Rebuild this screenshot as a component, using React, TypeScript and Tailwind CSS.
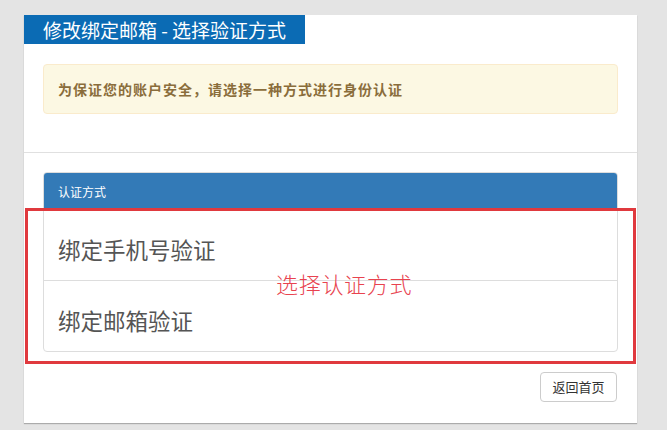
import React from "react";

export default function App() {
  const font = { fontFamily: '"Noto Sans CJK SC", "Liberation Sans", sans-serif' };
  return (
    <div className="w-[667px] h-[430px] bg-[#e4e4e4] pt-[15px] pl-[24px] overflow-hidden" style={font}>
      <div className="relative w-[613px] h-[408px] bg-white shadow-[0_1px_1px_rgba(0,0,0,0.25)]">
        <div className="w-[281px] h-[29px] bg-[#0b6bb4] text-white text-[19px] leading-[29px] pl-[19px] whitespace-nowrap">
          修改绑定邮箱 - 选择验证方式
        </div>
        <div className="mt-[20px] mx-[19px] h-[50px] bg-[#fcf8e3] border border-[#faebcc] rounded-[4px] flex items-center pl-[14px] text-[#8a6d3b] text-[14px] font-bold tracking-[1px]">
          为保证您的账户安全，请选择一种方式进行身份认证
        </div>
        <div className="mt-[38px] border-t border-[#e0e0e0]" />
        <div className="mt-[19px] mx-[19px] h-[180px] border border-[#dddddd] rounded-[4px] overflow-hidden flex flex-col">
          <div className="h-[37px] bg-[#337ab7] text-white text-[12px] flex items-center pl-[14px] shrink-0">
            认证方式
          </div>
          <div className="flex-1 flex items-center pl-[14px] pt-[10px] text-[22.5px] text-[#555] border-b border-[#dddddd]">
            绑定手机号验证
          </div>
          <div className="flex-1 flex items-center pl-[14px] pt-[10px] text-[22.5px] text-[#555]">
            绑定邮箱验证
          </div>
        </div>
        <div className="mt-[20px] mr-[20px] flex justify-end">
          <button className="w-[77px] h-[30px] border border-[#cccccc] rounded-[4px] bg-white text-[13px] text-[#333]">
            返回首页
          </button>
        </div>
        <div className="absolute left-[1px] top-[193px] w-[611px] h-[156px] border-[3px] border-[#e0393e] pointer-events-none" />
        <div className="absolute left-[252px] top-[254px] text-[22px] leading-[28px] text-[#e8434f] tracking-[0.7px] whitespace-nowrap font-light">
          选择认证方式
        </div>
      </div>
    </div>
  );
}
